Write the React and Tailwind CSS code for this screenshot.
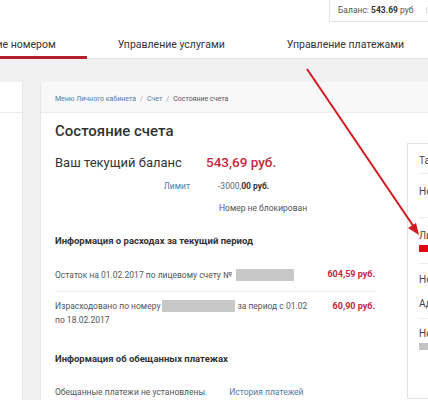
import { RotateCw } from "lucide-react"

const font = { fontFamily: 'Roboto, "Liberation Sans", sans-serif' }

const sideGroups = [
  { h: "h-[30px]", pt: "pt-[11px]", lines: ["Тарифный план"] },
  { h: "h-[44px]", pt: "pt-[12px]", lines: ["Номер телефона"] },
  { h: "h-[46px]", pt: "pt-[12px]", lines: ["Лицевой счет"], bar: "bg-[#e30613]" },
  { h: "h-[55px]", pt: "pt-[10px]", lines: ["Номер договора", "Адрес"] },
  { h: "h-[47px]", pt: "pt-[9px]", lines: ["Номер карты"], bar: "bg-[#c4c4c4]", last: true },
]

const App = () => {
  return (
    <div
      className="relative w-[428px] h-[400px] overflow-hidden bg-[#f1f1f1] text-[#333]"
      style={font}
    >
      {/* header */}
      <div className="bg-white border-b border-[#e2e2e2]">
        <div className="flex justify-end h-[22px]">
          <div className="flex items-center gap-[12px] pl-[8px] w-[99px] border-l border-b border-[#e4e4e4] text-[8.5px] whitespace-nowrap">
            <span className="text-[#555]">
              Баланс: <b className="text-[#333]">543.69</b> руб
            </span>
            <RotateCw className="h-[11px] w-[11px] text-[#bbb] shrink-0" strokeWidth={1.5} />
          </div>
        </div>
        <div className="flex h-[36px] items-end text-[10.5px] leading-[14px] whitespace-nowrap">
          <div className="ml-[-82px] px-[31px] pb-[4px] border-b-[3px] border-[#b3202c] mb-[-1px]">
            Управление номером
          </div>
          <div className="px-[31px] pb-[6px]">Управление услугами</div>
          <div className="px-[31px] pb-[6px]">Управление платежами</div>
        </div>
      </div>

      {/* body */}
      <div className="flex gap-[17px] pt-[23px]">
        <div className="w-[23px] h-[330px] shrink-0 bg-white border-r border-[#e6e6e6]">
          <div className="h-[31px] border-b border-[#ececec]" />
        </div>

        <div className="w-[560px] shrink-0 bg-white border-l border-[#e6e6e6]">
          <div className="h-[31px] flex items-center pt-[4px] px-[14px] bg-[#f8f8f8] border-b border-[#ececec] text-[7px] whitespace-nowrap">
            <span className="text-[#4f7aa8]">Меню Личного кабинета</span>
            <span className="mx-1 text-[#999]">/</span>
            <span className="text-[#4f7aa8]">Счет</span>
            <span className="mx-1 text-[#999]">/</span>
            <span className="text-[#555]">Состояние счета</span>
          </div>

          <div className="flex">
            <div className="w-[366px] shrink-0 pl-[14px] pr-[32px] text-[8.5px]">
              <h1 className="mt-[8px] text-[15px] font-medium leading-[20px]">Состояние счета</h1>

              <div className="mt-[11px] flex items-baseline whitespace-nowrap">
                <span className="w-[151px] text-[13px]">Ваш текущий баланс</span>
                <span className="text-[13.5px] font-medium text-[#c6283d]">543,69 руб.</span>
              </div>
              <div className="mt-[7px] flex items-baseline whitespace-nowrap text-[8.5px]">
                <span className="w-[135px] text-right text-[#4f7aa8]">Лимит</span>
                <span className="ml-[28px] text-[#666]">
                  -3000,<b className="text-[#333]">00 руб.</b>
                </span>
              </div>
              <div className="mt-[10px] ml-[164px] text-[#555] whitespace-nowrap">
                Номер не блокирован
              </div>

              <div className="mt-[19px] font-bold text-[9.5px] whitespace-nowrap">
                Информация о расходах за текущий период
              </div>

              <div className="mt-[20px] pb-[9px] flex items-center justify-between border-b border-[#ececec] whitespace-nowrap">
                <span className="flex items-center text-[#555]">
                  Остаток на 01.02.2017 по лицевому счету №
                  <span className="ml-1 inline-block w-[58px] h-[12px] bg-[#c8c8c8]" />
                </span>
                <span className="text-[#c6283d] font-bold text-[9px]">604,59 руб.</span>
              </div>

              <div className="mt-[7px] flex justify-between whitespace-nowrap">
                <div className="text-[#555] leading-[14px]">
                  <div className="flex items-center">
                    Израсходовано по номеру
                    <span className="mx-[2px] inline-block w-[73px] h-[12px] bg-[#c8c8c8]" />
                    за период с 01.02
                  </div>
                  <div>по 18.02.2017</div>
                </div>
                <span className="text-[#c6283d] font-bold text-[9px] leading-[14px]">60,90 руб.</span>
              </div>

              <div className="mt-[25px] font-bold text-[9.5px] whitespace-nowrap">
                Информация об обещанных платежах
              </div>

              <div className="mt-[20px] flex whitespace-nowrap">
                <span className="text-[#555]">Обещанные платежи не установлены.</span>
                <span className="ml-[22px] text-[#4f7aa8]">История платежей</span>
              </div>
            </div>

            <div className="mt-[30px] w-[150px] shrink-0 bg-white border border-[#e2e2e2] px-[11px] text-[10px] leading-[12px] text-[#444] whitespace-nowrap">
              {sideGroups.map((g, i) => (
                <div
                  key={i}
                  className={`${g.h} ${g.pt} ${g.last ? "" : "border-b border-[#ececec]"}`}
                >
                  {g.lines.map((l, j) => (
                    <div key={j} className={j > 0 ? "mt-[12px]" : ""}>
                      {l}
                    </div>
                  ))}
                  {g.bar && <div className={`mt-[3px] w-[40px] h-[7px] ${g.bar}`} />}
                </div>
              ))}
            </div>
          </div>
        </div>
      </div>

      {/* annotation arrow */}
      <svg className="absolute left-0 top-0 pointer-events-none" width="428" height="400">
        <line x1="307" y1="69" x2="414" y2="227" stroke="#d3161f" strokeWidth="2" />
        <polygon points="419,235 408,228 416,223" fill="#d3161f" />
      </svg>
    </div>
  )
}

export default App
